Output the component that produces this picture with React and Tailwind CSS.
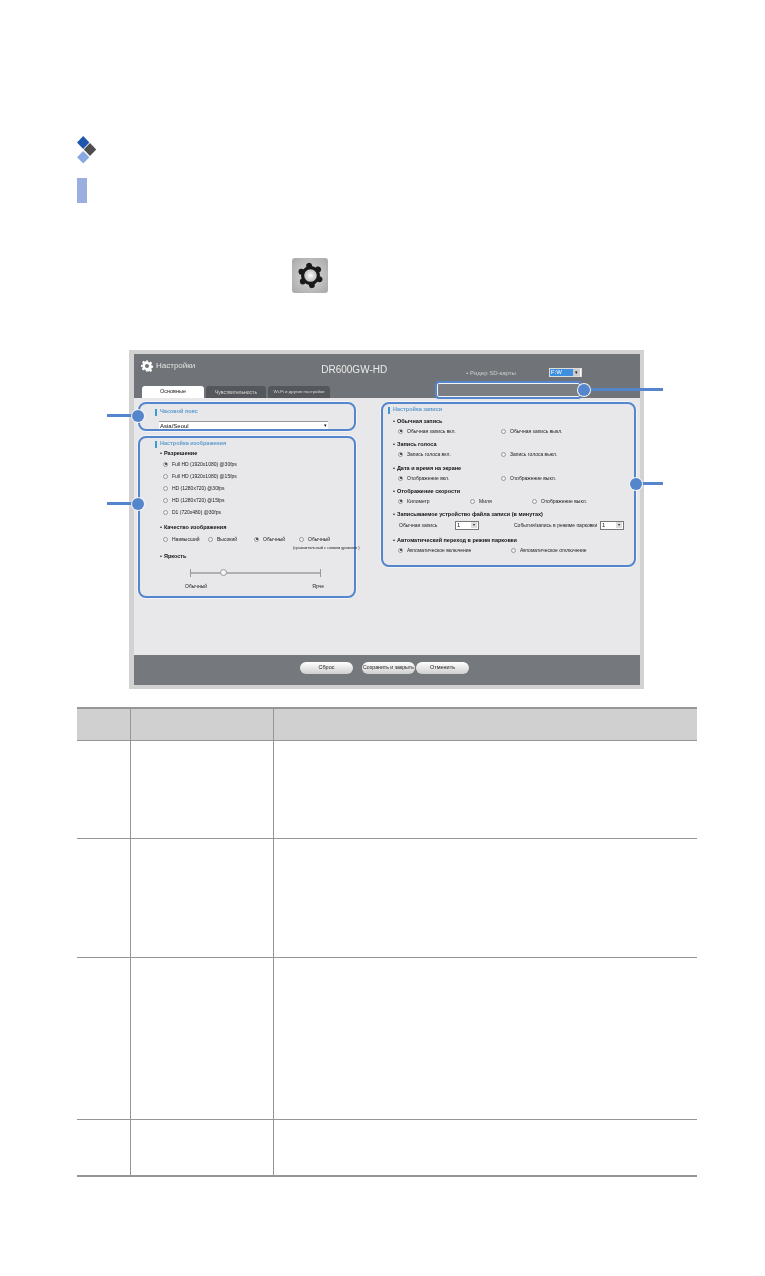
import React from "react";

const Radio = ({ on }) => (
  <span className="flex h-[5px] w-[5px] shrink-0 items-center justify-center rounded-full border-[0.5px] border-[#999] bg-[#f2f2f2]">
    {on && <span className="h-[2px] w-[2px] rounded-full bg-[#222]" />}
  </span>
);

const Option = ({ label, on, className }) => (
  <div className={`flex items-center gap-[4px] whitespace-nowrap ${className}`}>
    <Radio on={on} />
    <span>{label}</span>
  </div>
);

const PanelTitle = ({ children, className }) => (
  <div className={`flex h-[8px] items-center gap-[3px] text-[5.5px] font-bold text-[#5b9bcf] ${className}`}>
    <span className="h-[7px] w-[2px] bg-[#3b9bd8]" />
    {children}
  </div>
);

const Heading = ({ children, className }) => (
  <div className={`flex h-[8px] items-center gap-[2px] whitespace-nowrap text-[5.5px] font-bold text-[#111] ${className}`}>
    <span>•</span>
    {children}
  </div>
);

const SmallSelect = ({ className }) => (
  <div className={`flex h-[9px] w-[24px] items-center justify-between border border-[#777] bg-white pl-[1px] text-[6px] ${className}`}>
    1
    <span className="mr-[1px] flex h-[6px] w-[6px] items-center justify-center bg-[#ddd] text-[4px] leading-none">▾</span>
  </div>
);

const Callout = ({ className, lineClass }) => (
  <div className={`absolute flex items-center ${className}`}>
    <span className={`h-[3px] bg-[#5585cd] ${lineClass}`} />
  </div>
);

const Dot = ({ className }) => (
  <span className={`absolute h-[12px] w-[12px] rounded-full bg-[#5585cd] shadow-[0_0_0_1px_#f4f4f4] ${className}`} />
);

const panelClass = "relative rounded-[8px] border-2 border-[#5585cd] shadow-[0_0_0_1px_#f4f4f4]";

const resolutions = [
  ["Full HD (1920x1080) @30fps", true],
  ["Full HD (1920x1080) @15fps", false],
  ["HD (1280x720) @30fps", false],
  ["HD (1280x720) @15fps", false],
  ["D1 (720x480) @30fps", false],
];

const rows = [
  ["h-[32px] bg-[#d0d0d0]"],
  ["h-[98px]"],
  ["h-[119px]"],
  ["h-[162px]"],
  ["h-[55px]"],
];

function SettingsFrame() {
  return (
    <div className="ml-[129px] mt-[57px] h-[339px] w-[515px] border-[4px] border-l-[5px] border-[#d2d2d2] text-[5px] leading-none text-[#222] blur-[0.3px]">
      <div className="flex h-full flex-col bg-[#e8e7e9]">
        {/* header */}
        <div className="relative h-[44px] bg-[#707377]">
          <div className="flex h-[32px] items-start">
            <div className="ml-[7px] mt-[6px] flex items-center gap-[3px] text-[8px] text-[#e4e4e4]">
              <svg width="12" height="12" viewBox="0 0 24 24" fill="#fff">
                <path d="M10 1h4l.7 3.2 2 .8 2.8-1.8 2.8 2.8-1.8 2.8.8 2 3.2.7v4l-3.2.7-.8 2 1.8 2.8-2.8 2.8-2.8-1.8-2 .8L14 23h-4l-.7-3.2-2-.8-2.8 1.8-2.8-2.8 1.8-2.8-.8-2L0 14v-4l3.200-.7.8-2L2.200 4.500 5 1.700l2.800 1.800 2-.8zM12 8a4 4 0 100 8 4 4 0 000-8z" fillRule="evenodd" />
              </svg>
              Настройки
            </div>
            <div className="ml-[126px] mt-[11px] text-[10px] text-[#ececec]">DR600GW-HD</div>
            <div className="ml-[79px] mt-[16px] whitespace-nowrap text-[6px] text-[#cfcfcf]">• Ридер SD-карты</div>
            <div className="ml-[33px] mt-[14px] flex h-[9px] w-[33px] items-center border border-[#ddd] bg-white">
              <span className="h-full w-[23px] bg-[#3f8fe0] pl-[1px] text-[6px] leading-[7px] text-white">F:W</span>
              <span className="ml-auto mr-[1px] flex h-[7px] w-[7px] items-center justify-center bg-[#ccc] text-[5px] text-[#111]">▾</span>
            </div>
          </div>
          <div className="ml-[8px] flex h-[12px] items-stretch gap-[2px] text-[5px] text-[#d8d8d8]">
            <div className="flex w-[62px] items-center justify-center rounded-t-[3px] bg-white text-[5.5px] font-medium text-[#222]">Основные</div>
            <div className="flex w-[60px] items-center justify-center rounded-t-[3px] bg-[#54575b]">Чувствительность</div>
            <div className="flex w-[62px] items-center justify-center whitespace-nowrap rounded-t-[3px] bg-[#54575b] text-[4.4px]">Wi-Fi и другие настройки</div>
          </div>
          <div className="absolute left-[301px] top-[27px] h-[18px] w-[147px] rounded-[4px] border-2 border-[#5585cd] bg-[#7b7e82] shadow-[inset_0_0_0_1px_#f4f4f4]">
            <Callout className="left-full top-[5px]" lineClass="w-[83px]" />
            <Dot className="left-[141px] top-[1px]" />
          </div>
        </div>

        {/* body */}
        <div className="flex h-[257px] gap-[25px] pl-[4px] pt-[4px]">
          <div className="flex w-[218px] flex-col gap-[5px]">
            <div className={`${panelClass} h-[29px] pl-[15px] pt-[4px]`}>
              <PanelTitle>Часовой пояс</PanelTitle>
              <div className="ml-[4px] mt-[5px] flex h-[8px] w-[169px] items-center justify-between border-t border-[#999] bg-white pl-[1px] text-[6px] text-[#111]">
                Asia/Seoul
                <span className="mr-[1px] text-[5px]">▾</span>
              </div>
              <Callout className="right-full top-[10px] mr-[2px]" lineClass="w-[31px]" />
              <Dot className="-left-[8px] top-[6px]" />
            </div>

            <div className={`${panelClass} h-[162px] pl-[15px]`}>
              <PanelTitle className="mt-[2px]">Настройка изображения</PanelTitle>
              <Heading className="ml-[5px] mt-[2px]">Разрешение</Heading>
              {resolutions.map(([label, on]) => (
                <Option key={label} label={label} on={on} className="ml-[8px] h-[12px]" />
              ))}
              <Heading className="ml-[5px] mt-[6px]">Качество изображения</Heading>
              <div className="ml-[8px] mt-[1px] flex h-[12px]">
                <Option label="Наивысший" className="w-[45px]" />
                <Option label="Высокий" className="w-[46px]" />
                <Option label="Обычный" on className="w-[45px]" />
                <Option label="Обычный" />
              </div>
              <div className="ml-[138px] flex h-[6px] items-center whitespace-nowrap text-[4px] font-medium">(сравнительный с низким уровнем )</div>
              <Heading className="ml-[5px] mt-[2px]">Яркость</Heading>
              <div className="relative ml-[35px] mt-[8px] flex h-[8px] w-[131px] items-center justify-between border-x border-[#999]">
                <span className="h-[2px] w-full bg-[#b0b0b0]" />
                <span className="absolute left-[29px] top-[0px] h-[7px] w-[7px] rounded-full border border-[#999] bg-[#f4f4f4]" />
              </div>
              <div className="ml-[30px] mt-[6px] flex h-[6px] w-[139px] items-center justify-between font-medium">
                <span>Обычный</span>
                <span>Ярче</span>
              </div>
              <Callout className="right-full top-[64px] mr-[2px]" lineClass="w-[31px]" />
              <Dot className="-left-[8px] top-[60px]" />
            </div>
          </div>

          <div className={`${panelClass} h-[165px] w-[255px]`}>
            <PanelTitle className="ml-[5px] mt-[2px]">Настройка записи</PanelTitle>

            <Heading className="ml-[10px] mt-[4px]">Обычная запись</Heading>
            <div className="ml-[15px] flex h-[10px]">
              <Option label="Обычная запись вкл." on className="w-[103px]" />
              <Option label="Обычная запись выкл." />
            </div>

            <Heading className="ml-[10px] mt-[5px]">Запись голоса</Heading>
            <div className="ml-[15px] flex h-[10px]">
              <Option label="Запись голоса вкл." on className="w-[103px]" />
              <Option label="Запись голоса выкл." />
            </div>

            <Heading className="ml-[10px] mt-[6px]">Дата и время на экране</Heading>
            <div className="ml-[15px] flex h-[10px]">
              <Option label="Отображение вкл." on className="w-[103px]" />
              <Option label="Отображение выкл." />
            </div>

            <Heading className="ml-[10px] mt-[5px]">Отображение скорости</Heading>
            <div className="ml-[15px] flex h-[10px]">
              <Option label="Километр" on className="w-[72px]" />
              <Option label="Миля" className="w-[62px]" />
              <Option label="Отображение выкл." />
            </div>

            <Heading className="ml-[10px] mt-[5px]">Записываемое устройство файла записи (в минутах)</Heading>
            <div className="ml-[16px] flex h-[12px] items-center whitespace-nowrap">
              <span className="w-[56px]">Обычная запись</span>
              <SmallSelect />
              <span className="ml-[35px] w-[86px]">События/запись в режиме парковки</span>
              <SmallSelect />
            </div>

            <Heading className="ml-[10px] mt-[6px]">Автоматический переход в режим парковки</Heading>
            <div className="ml-[15px] flex h-[10px]">
              <Option label="Автоматическое включение" on className="w-[113px]" />
              <Option label="Автоматическое отключение" />
            </div>

            <Callout className="left-full top-[78px] ml-[2px]" lineClass="w-[27px]" />
            <Dot className="-right-[8px] top-[74px]" />
          </div>
        </div>

        {/* footer */}
        <div className="flex h-[30px] items-start bg-[#75787c] pl-[166px] pt-[7px] text-[5.5px] text-[#222]">
          <button className="flex h-[12px] w-[53px] items-center justify-center rounded-full bg-gradient-to-b from-white to-[#cfcfcf]">Сброс</button>
          <button className="ml-[9px] flex h-[12px] w-[53px] items-center justify-center whitespace-nowrap rounded-full bg-gradient-to-b from-white to-[#cfcfcf] text-[5.2px]">Сохранить и закрыть</button>
          <button className="ml-[1px] flex h-[12px] w-[53px] items-center justify-center rounded-full bg-gradient-to-b from-white to-[#cfcfcf]">Отменить</button>
        </div>
      </div>
    </div>
  );
}

export default function App() {
  return (
    <div className="h-[1276px] w-[765px] overflow-hidden bg-white pt-[136px] font-['Liberation_Sans',sans-serif]">
      <svg className="ml-[77px] block" width="20" height="28" viewBox="0 0 20 28">
        <polygon points="6.200,0 12.400,6.500 6.200,13 0,6.500" fill="#1f56ad" />
        <polygon points="13,7 19.200,13.500 13,20 6.800,13.500" fill="#4d4d4f" />
        <polygon points="6.200,15 12.400,21.300 6.200,27.500 0,21.300" fill="#8aa9e3" />
      </svg>

      <div className="ml-[77px] mt-[14px] h-[25px] w-[10px] bg-[#9aaee0]" />

      <div className="ml-[292px] mt-[55px] flex h-[35px] w-[36px] items-center justify-center rounded-[3px] bg-[radial-gradient(circle,#dcdcdc,#a6a6a6)]">
        <svg width="27" height="27" viewBox="0 0 27 27">
          <defs>
            <radialGradient id="gearHole">
              <stop offset="0%" stopColor="#ffffff" />
              <stop offset="100%" stopColor="#bdbdbd" />
            </radialGradient>
          </defs>
          <g fill="#1b1a1b" transform="rotate(-8 13.500 13.500)">
            <circle cx="13.500" cy="13.500" r="9.500" />
            <circle cx="13.500" cy="3.800" r="3" />
            <circle cx="13.500" cy="23.200" r="3" />
            <circle cx="5.100" cy="8.600" r="3" />
            <circle cx="21.900" cy="8.600" r="3" />
            <circle cx="5.100" cy="18.400" r="3" />
            <circle cx="21.900" cy="18.400" r="3" />
          </g>
          <circle cx="13.500" cy="13.500" r="6.300" fill="url(#gearHole)" />
        </svg>
      </div>

      <SettingsFrame />

      {/* table with blanked cells */}
      <div className="ml-[77px] mt-[18px] w-[620px] border-y-2 border-[#969696]">
        {rows.map(([cls], i) => (
          <div
            key={i}
            className={`grid grid-cols-[53px_143px_1fr] ${cls} ${i < rows.length - 1 ? "border-b border-[#969696]" : ""}`}
          >
            <div />
            <div className="border-l border-[#969696]" />
            <div className="border-l border-[#969696]" />
          </div>
        ))}
      </div>
    </div>
  );
}
